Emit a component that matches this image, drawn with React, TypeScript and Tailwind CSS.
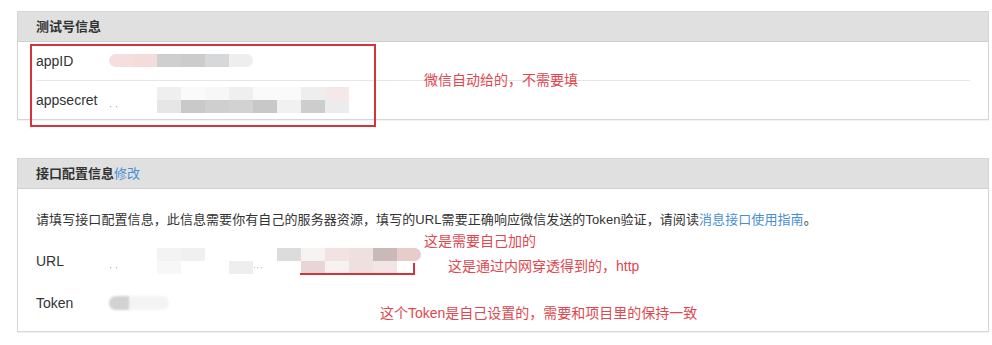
import React from "react";

const font = { fontFamily: '"Liberation Sans", "Noto Sans CJK SC", sans-serif' };

// pixelated/blurred secret values, drawn as blocks
const Mosaic = ({ blocks }: { blocks: string[] }) => (
  <div className="flex h-[13px] overflow-hidden rounded-full blur-[0.6px]">
    {blocks.map((c, i) => (
      <div key={i} className="h-full w-[24px]" style={{ background: c }} />
    ))}
  </div>
);

const App: React.FC = () => {
  return (
    <div className="relative h-[345px] w-[992px] bg-white text-[#333]" style={font}>
      <div className="pt-[11px] pl-[17px]">
        {/* 测试号信息 */}
        <div className="w-[972px] border border-[#d6d6d6] shadow-[0_1px_1px_rgba(0,0,0,0.05)]">
          <div className="flex h-[30px] items-center border-b border-[#cfcfcf] bg-[#e0e0e0] pl-[18px] text-[13px] font-bold">
            测试号信息
          </div>
          <div className="px-[18px]">
            <div className="flex h-[39px] items-center border-b border-[#e6e6e6] text-[14px]">
              <span className="w-[73px]">appID</span>
              <div className="mt-[-2px]">
                <Mosaic blocks={["#f6dede", "#f3dcdc", "#cfcfcf", "#cccccc", "#d6d8d9", "#eeeeee"]} />
              </div>
            </div>
            <div className="flex h-[38px] items-center text-[14px]">
              <span className="w-[73px]">appsecret</span>
              <div className="flex flex-col gap-0 blur-[0.6px]">
                <div className="flex h-[13px]">
                  <div className="w-[48px]" />
                  <div className="w-[24px] bg-[#efefef]" />
                  <div className="w-[24px] bg-[#fafafa]" />
                  <div className="w-[24px] bg-[#f7f7f7]" />
                  <div className="w-[24px] bg-[#efefef]" />
                  <div className="w-[48px] bg-[#fafafa]" />
                  <div className="w-[24px] bg-[#eeeeee]" />
                  <div className="w-[24px] bg-[#f5e8e8]" />
                </div>
                <div className="flex h-[13px]">
                  <div className="w-[48px] text-[10px] leading-[13px] text-[#aaa]">· ·</div>
                  <div className="w-[24px] bg-[#e6e6e6]" />
                  <div className="w-[24px] bg-[#c9c9c9]" />
                  <div className="w-[24px] bg-[#cfcfcf]" />
                  <div className="w-[24px] bg-[#d2d2d2]" />
                  <div className="w-[24px] bg-[#c8c8c8]" />
                  <div className="w-[24px] bg-[#f1f1f1]" />
                  <div className="w-[24px] bg-[#cdcdcd]" />
                  <div className="w-[24px] bg-[#ececec]" />
                </div>
              </div>
            </div>
          </div>
        </div>

        {/* 接口配置信息 */}
        <div className="mt-[38px] w-[972px] border border-[#d6d6d6] shadow-[0_1px_1px_rgba(0,0,0,0.05)]">
          <div className="flex h-[30px] items-center border-b border-[#cfcfcf] bg-[#e0e0e0] pl-[18px] text-[13px] font-bold">
            接口配置信息<span className="font-normal text-[#4a8fd4]">修改</span>
          </div>
          <div className="px-[18px] pt-[21px] pb-[7px]">
            <p className="text-[13px] leading-[20px] tracking-[0.08px]">
              请填写接口配置信息，此信息需要你有自己的服务器资源，填写的URL需要正确响应微信发送的Token验证，请阅读
              <span className="text-[#4a8fd4]">消息接口使用指南</span>。
            </p>
            <div className="mt-[10px] flex h-[42px] items-center text-[14px]">
              <span className="w-[73px]">URL</span>
              <div className="flex flex-col blur-[0.6px]">
                <div className="flex h-[13px]">
                  <div className="w-[48px]" />
                  <div className="w-[24px] bg-[#f3f3f3]" />
                  <div className="w-[24px] bg-[#f0f0f0]" />
                  <div className="w-[72px]" />
                  <div className="w-[24px] bg-[#dcdcdc]" />
                  <div className="w-[24px] bg-[#f7f3f3]" />
                  <div className="w-[24px] bg-[#f3e2e2]" />
                  <div className="w-[24px] bg-[#efe0e0]" />
                  <div className="w-[24px] bg-[#c9b9b9]" />
                  <div className="w-[24px] bg-[#e8cccc] rounded-r-full" />
                </div>
                <div className="flex h-[13px]">
                  <div className="w-[48px] text-[10px] leading-[13px] text-[#aaa]">· ·</div>
                  <div className="w-[24px] bg-[#f7f7f7]" />
                  <div className="w-[48px]" />
                  <div className="w-[24px] bg-[#eeeeee]" />
                  <div className="w-[48px] text-[10px] leading-[13px] text-[#bbb]">···</div>
                  <div className="w-[24px] bg-[#e8d6d6]" />
                  <div className="w-[24px] bg-[#f8f1f1]" />
                  <div className="w-[24px] bg-[#efdfdf]" />
                  <div className="w-[24px] bg-[#f3e5e5]" />
                </div>
              </div>
            </div>
            <div className="flex h-[42px] items-center text-[14px]">
              <span className="w-[73px]">Token</span>
              <div className="flex h-[14px] w-[60px] blur-[0.8px]">
                <div className="w-[20px] rounded-l-full bg-[#d2d2d2]" />
                <div className="w-[40px] rounded-r-full bg-[#f4f4f4]" />
              </div>
            </div>
          </div>
        </div>
      </div>

      {/* annotations */}
      <div className="pointer-events-none absolute left-[30px] top-[44px] h-[83px] w-[346px] border-2 border-[#d2343e]" />
      <div className="absolute left-[424px] top-[70px] text-[14px] leading-[20px] text-[#e0474f]">
        微信自动给的，不需要填
      </div>
      <div className="absolute left-[424px] top-[231px] text-[14px] leading-[20px] text-[#e0474f]">
        这是需要自己加的
      </div>
      <div className="absolute left-[448px] top-[256px] text-[14px] leading-[20px] text-[#e0474f]">
        这是通过内网穿透得到的，http
      </div>
      <div className="absolute left-[300px] top-[263px] h-[12px] w-[115px] border-r-2 border-b-2 border-[#d2343e]" />
      <div className="absolute left-[380px] top-[303px] text-[14px] leading-[20px] text-[#e0474f]">
        这个Token是自己设置的，需要和项目里的保持一致
      </div>
    </div>
  );
};

export default App;
